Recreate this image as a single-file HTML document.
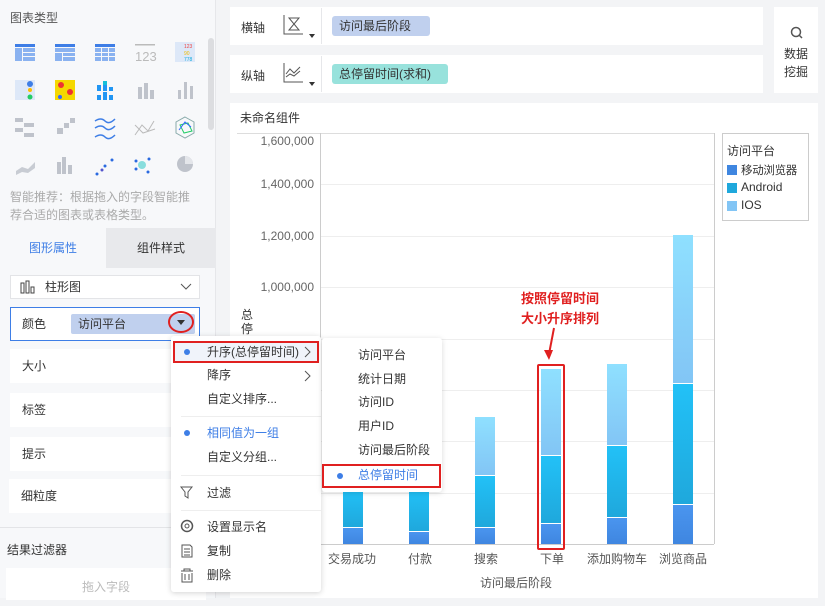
<!DOCTYPE html>
<html><head><meta charset="utf-8"><style>
*{box-sizing:border-box;margin:0;padding:0}
body{width:825px;height:598px;overflow:hidden;background:#f3f4f6;font-family:"Liberation Sans","Noto Sans CJK SC",sans-serif;font-size:12px;color:#333;position:relative}
.a{position:absolute}
.t{font-size:12px;color:#333;white-space:nowrap}
.g{color:#999}
.row{position:absolute;left:10px;width:190px;height:34px;background:#fff;padding-left:12px;line-height:34px}
.mi{position:absolute;left:0;width:150px;height:22px;line-height:22px;padding-left:36px}
.si{position:absolute;left:0;width:120px;line-height:22px;padding-left:36px}
.bar{position:absolute;width:20px}
.c1{background:linear-gradient(#4a95ef,#3f86e0)}
.c2{background:linear-gradient(#22c1f7,#1fa8dc)}
.c3{background:linear-gradient(#8fe0ff,#82c5f5)}
</style></head><body>
<div class="a" style="left:0;top:0;width:216px;height:598px;background:#f7f8fa;border-right:1px solid #e6e7ea"></div>
<div class="a t" style="left:10px;top:9px;color:#555">图表类型</div>
<div class="a" style="left:208px;top:38px;width:6px;height:92px;background:#dcdde0;border-radius:3px"></div>
<svg class="a" style="left:0;top:35px" width="205" height="150">
<g fill="#3e7ee6"><rect x="15" y="9" width="20" height="3"/><rect x="55" y="9" width="20" height="3"/><rect x="95" y="9" width="20" height="3"/></g>
<g fill="#8ab2f0"><rect x="15" y="13" width="7" height="13"/><rect x="23" y="13" width="12" height="4"/><rect x="23" y="18" width="12" height="3"/><rect x="23" y="22" width="12" height="4"/>
<rect x="55" y="13" width="20" height="4"/><rect x="55" y="18" width="7" height="8"/><rect x="63" y="18" width="12" height="3"/><rect x="63" y="22" width="12" height="4"/>
<rect x="95" y="13" width="6" height="4"/><rect x="102" y="13" width="6" height="4"/><rect x="109" y="13" width="6" height="4"/><rect x="95" y="18" width="6" height="3"/><rect x="102" y="18" width="6" height="3"/><rect x="109" y="18" width="6" height="3"/><rect x="95" y="22" width="6" height="4"/><rect x="102" y="22" width="6" height="4"/><rect x="109" y="22" width="6" height="4"/></g>
<rect x="135" y="9" width="20" height="1.5" fill="#bbb"/><text x="135" y="26" font-size="13" fill="#bbb" font-family="Liberation Sans">123</text>
<rect x="175" y="7" width="20" height="20" fill="#dde8f8"/><text x="184" y="13" font-size="5" fill="#e44">123</text><text x="184" y="20" font-size="5" fill="#eb0">90</text><text x="184" y="26" font-size="5" fill="#1ad">778</text>
<rect x="15" y="45" width="20" height="20" fill="#dde8f8"/><circle cx="30" cy="49" r="3" fill="#3e7ee6"/><circle cx="30" cy="55" r="2" fill="#fb0"/><circle cx="30" cy="62" r="2.5" fill="#2c6"/>
<rect x="55" y="45" width="20" height="20" fill="#f5d800"/><circle cx="61" cy="50" r="3" fill="#e33"/><circle cx="70" cy="57" r="3" fill="#e33"/><circle cx="60" cy="62" r="2" fill="#36f"/>
<g fill="#2196f3"><rect x="97" y="50" width="4" height="6"/><rect x="103" y="46" width="4" height="10"/><rect x="109" y="52" width="4" height="4"/><rect x="97" y="60" width="4" height="5"/><rect x="103" y="57" width="4" height="8"/><rect x="109" y="60" width="4" height="5"/></g><g fill="#16c0d8"><rect x="103" y="46" width="4" height="4"/></g>
<g fill="#bfc3cb"><rect x="138" y="52" width="4" height="12"/><rect x="144" y="48" width="4" height="16"/><rect x="150" y="55" width="4" height="9"/><rect x="178" y="55" width="3" height="9"/><rect x="184" y="47" width="3" height="17"/><rect x="190" y="51" width="3" height="13"/>
<rect x="15" y="83" width="8" height="4"/><rect x="24" y="88" width="10" height="4"/><rect x="15" y="93" width="8" height="4"/><rect x="24" y="98" width="10" height="4"/><rect x="57" y="93" width="6" height="6"/><rect x="64" y="88" width="5" height="5"/><rect x="70" y="83" width="5" height="5"/></g>
<path d="M95 86 q6 -4 10 0 t10 -2 M95 93 q6 -4 10 0 t10 -2 M95 102 q6 -4 10 0 t10 -2" stroke="#3e7ee6" stroke-width="1.5" fill="none"/>
<path d="M135 100 l7 -10 l6 6 l6 -10 M135 90 l8 8 l12 -4" stroke="#bbb" fill="none"/>
<path d="M185 82 l9 5 v11 l-9 5 l-9 -5 v-11z" stroke="#8aa" fill="none"/><path d="M180 90 l8 -2 l4 8 l-8 2z" stroke="#2c6" fill="none"/><path d="M179 95 l6 -8 l6 5" stroke="#36f" fill="none"/>
<path d="M16 136 l6 -4 l6 2 l7 -7 v6 l-7 5 l-6 -1 l-6 3z" fill="#c8ccd3"/>
<g fill="#bfc3cb"><rect x="57" y="127" width="4" height="12"/><rect x="62" y="122" width="4" height="17"/><rect x="68" y="130" width="4" height="9"/></g>
<g fill="#2a6ae0"><circle cx="97" cy="139" r="1.5"/><circle cx="105" cy="131" r="1.5"/><circle cx="112" cy="125" r="1.5"/><circle cx="102" cy="135" r="1.5" fill="#55c"/></g>
<circle cx="142" cy="130" r="4" fill="#8dd"/><g fill="#2a6ae0"><circle cx="136" cy="126" r="1.5"/><circle cx="149" cy="124" r="1.5"/><circle cx="136" cy="134" r="1.5"/><circle cx="148" cy="137" r="1.5"/></g>
<circle cx="185" cy="129" r="8" fill="#bfc3cb"/><path d="M185 129 v-8 a8 8 0 0 1 8 8z" fill="#e4e6ea"/>
</svg>
<div class="a" style="left:10px;top:188px;width:190px;line-height:18px;color:#aaa">智能推荐：根据拖入的字段智能推荐合适的图表或表格类型。</div>
<div class="a" style="left:0;top:228px;width:106px;height:40px;background:#f7f8fa;line-height:40px;text-align:center;color:#3e7ee6">图形属性</div>
<div class="a" style="left:106px;top:228px;width:110px;height:40px;background:#e8e9ec;line-height:40px;text-align:center">组件样式</div>
<div class="a" style="left:10px;top:275px;width:190px;height:24px;background:#fff;border:1px solid #e3e4e7;line-height:22px;padding-left:34px">柱形图</div>
<svg class="a" style="left:20px;top:280px" width="16" height="14"><path d="M1 3v10h3v-10zM6 1v12h3v-12zM11 7v6h3v-6z" stroke="#444" fill="none"/></svg>
<svg class="a" style="left:180px;top:283px" width="12" height="8"><path d="M1 1l5 5l5-5" stroke="#555" fill="none"/></svg>
<div class="a" style="left:10px;top:307px;width:190px;height:34px;background:#fff;border:1px solid #3e7ee6;line-height:32px;padding-left:11px">颜色</div>
<div class="a" style="left:71px;top:314px;width:124px;height:20px;background:#c0d0ee;line-height:20px;padding-left:7px;border-radius:2px">访问平台</div>
<div class="a" style="left:168px;top:311px;width:26px;height:22px;border:2px solid #e02020;border-radius:50%"></div>
<div class="a" style="left:177px;top:320px;width:0;height:0;border-left:4px solid transparent;border-right:4px solid transparent;border-top:5px solid #333"></div>
<div class="row" style="top:349px">大小</div>
<div class="row" style="top:393px">标签</div>
<div class="row" style="top:437px">提示</div>
<div class="row" style="top:479px;left:9px">细粒度</div>
<div class="a" style="left:0;top:527px;width:215px;height:1px;background:#e3e4e7"></div>
<div class="a t" style="left:7px;top:541px">结果过滤器</div>
<div class="a" style="left:6px;top:568px;width:200px;height:32px;background:#fff;text-align:center;line-height:38px;color:#bbb">拖入字段</div>

<div class="a" style="left:230px;top:7px;width:533px;height:38px;background:#fff"></div>
<div class="a" style="left:230px;top:55px;width:533px;height:38px;background:#fff"></div>
<div class="a" style="left:321px;top:8px;width:1px;height:36px;background:#e6e7ea"></div>
<div class="a" style="left:321px;top:56px;width:1px;height:36px;background:#e6e7ea"></div>
<div class="a t" style="left:241px;top:19px">横轴</div>
<div class="a t" style="left:241px;top:67px">纵轴</div>
<svg class="a" style="left:283px;top:14px" width="36" height="26"><path d="M1 1v19h19 M6 4h10l-5 6l5 6h-10l5-6z" stroke="#555" fill="none"/><path d="M26 20l6 0l-3 4z" fill="#333"/></svg>
<svg class="a" style="left:283px;top:62px" width="36" height="26"><path d="M1 1v19h19 M3 12l4-5l4 4l6-6 M3 15l4-3l4 2l6-5" stroke="#555" fill="none"/><path d="M26 20l6 0l-3 4z" fill="#333"/></svg>
<div class="a" style="left:332px;top:16px;width:98px;height:20px;background:#c0d0ee;border-radius:3px;line-height:20px;padding-left:7px">访问最后阶段</div>
<div class="a" style="left:332px;top:64px;width:116px;height:20px;background:#98e2dc;border-radius:3px;line-height:20px;padding-left:7px">总停留时间(求和)</div>
<div class="a" style="left:774px;top:7px;width:44px;height:86px;background:#fff"></div>
<svg class="a" style="left:790px;top:26px" width="14" height="14"><circle cx="6" cy="6" r="4.5" stroke="#555" stroke-width="1.5" fill="none"/><path d="M9 9l3 3" stroke="#555" stroke-width="1.5"/></svg>
<div class="a t" style="left:784px;top:45px;line-height:18px">数据<br>挖掘</div>

<div class="a" style="left:230px;top:103px;width:588px;height:495px;background:#fff"></div>
<div class="a t" style="left:240px;top:109px">未命名组件</div>
<div class="a" style="left:237px;top:133px;width:478px;height:1px;background:#ddd"></div>
<div class="a" style="left:320px;top:133px;width:1px;height:411px;background:#ccc"></div>
<div class="a" style="left:714px;top:133px;width:1px;height:411px;background:#ccc"></div>
<div class="a" style="left:321px;top:184px;width:393px;height:1px;background:#eee"></div>
<div class="a" style="left:321px;top:236px;width:393px;height:1px;background:#eee"></div>
<div class="a" style="left:321px;top:287px;width:393px;height:1px;background:#eee"></div>
<div class="a" style="left:321px;top:339px;width:393px;height:1px;background:#eee"></div>
<div class="a" style="left:321px;top:390px;width:393px;height:1px;background:#eee"></div>
<div class="a" style="left:321px;top:441px;width:393px;height:1px;background:#eee"></div>
<div class="a" style="left:321px;top:493px;width:393px;height:1px;background:#eee"></div>
<div class="a" style="left:320px;top:544px;width:394px;height:1px;background:#ccc"></div>
<div class="a g" style="left:240px;top:134px;width:74px;text-align:right;color:#666">1,600,000</div>
<div class="a g" style="left:240px;top:177px;width:74px;text-align:right;color:#666">1,400,000</div>
<div class="a g" style="left:240px;top:229px;width:74px;text-align:right;color:#666">1,200,000</div>
<div class="a g" style="left:240px;top:280px;width:74px;text-align:right;color:#666">1,000,000</div>
<div class="a t" style="left:241px;top:308px;line-height:14px">总<br>停</div>
<div class="bar c2" style="left:343px;top:490px;height:37px"></div><div class="bar c1" style="left:343px;top:528px;height:16px"></div>
<div class="bar c2" style="left:409px;top:490px;height:41px"></div><div class="bar c1" style="left:409px;top:532px;height:12px"></div>
<div class="bar c3" style="left:475px;top:417px;height:58px"></div><div class="bar c2" style="left:475px;top:476px;height:51px"></div><div class="bar c1" style="left:475px;top:528px;height:16px"></div>
<div class="bar c3" style="left:541px;top:369px;height:86px"></div><div class="bar c2" style="left:541px;top:456px;height:67px"></div><div class="bar c1" style="left:541px;top:524px;height:20px"></div>
<div class="bar c3" style="left:607px;top:364px;height:81px"></div><div class="bar c2" style="left:607px;top:446px;height:71px"></div><div class="bar c1" style="left:607px;top:518px;height:26px"></div>
<div class="bar c3" style="left:673px;top:235px;height:148px"></div><div class="bar c2" style="left:673px;top:384px;height:120px"></div><div class="bar c1" style="left:673px;top:505px;height:39px"></div>
<div class="a" style="left:537px;top:364px;width:28px;height:186px;border:2px solid #e02020;border-radius:2px"></div>
<div class="a" style="left:505px;top:289px;line-height:20px;color:#e02020;font-weight:bold;font-size:13px;text-align:center;width:110px">按照停留时间<br>大小升序排列</div>
<svg class="a" style="left:540px;top:326px" width="20" height="36"><path d="M14 2l-5 26" stroke="#e02020" stroke-width="2"/><path d="M4 24l5 10l4-10z" fill="#e02020"/></svg>
<div class="a t" style="left:328px;top:550px;color:#555">交易成功</div>
<div class="a t" style="left:408px;top:550px;color:#555">付款</div>
<div class="a t" style="left:474px;top:550px;color:#555">搜索</div>
<div class="a t" style="left:540px;top:550px;color:#555">下单</div>
<div class="a t" style="left:587px;top:550px;color:#555">添加购物车</div>
<div class="a t" style="left:659px;top:550px;color:#555">浏览商品</div>
<div class="a t" style="left:480px;top:574px;color:#555">访问最后阶段</div>
<div class="a" style="left:722px;top:133px;width:87px;height:88px;border:1px solid #ccc"></div>
<div class="a t" style="left:727px;top:142px">访问平台</div>
<div class="a" style="left:727px;top:165px;width:10px;height:10px;background:#3f86e0"></div><div class="a t" style="left:741px;top:162px;font-size:11.5px;letter-spacing:-0.3px">移动浏览器</div>
<div class="a" style="left:727px;top:183px;width:10px;height:10px;background:#1fa8dc"></div><div class="a t" style="left:741px;top:180px">Android</div>
<div class="a" style="left:727px;top:201px;width:10px;height:10px;background:#82c5f5"></div><div class="a t" style="left:741px;top:198px">IOS</div>

<div class="a" style="left:171px;top:336px;width:150px;height:256px;background:#fff;box-shadow:0 1px 6px rgba(0,0,0,.18);border-radius:3px">
 <div class="a" style="left:2px;top:5px;width:146px;height:22px;background:#f0f3fa;border:2px solid #e02020"></div>
 <div class="mi" style="top:5px">升序(总停留时间)</div>
 <div class="mi" style="top:28px">降序</div>
 <div class="mi" style="top:52px">自定义排序...</div>
 <div class="a" style="left:10px;top:80px;width:140px;height:1px;background:#eee"></div>
 <div class="mi" style="top:86px;color:#3e7ee6">相同值为一组</div>
 <div class="mi" style="top:110px">自定义分组...</div>
 <div class="a" style="left:10px;top:139px;width:140px;height:1px;background:#eee"></div>
 <div class="mi" style="top:146px">过滤</div>
 <div class="a" style="left:10px;top:174px;width:140px;height:1px;background:#eee"></div>
 <div class="mi" style="top:180px">设置显示名</div>
 <div class="mi" style="top:204px">复制</div>
 <div class="mi" style="top:228px">删除</div>
 <div class="a" style="left:13px;top:13px;width:6px;height:6px;border-radius:50%;background:#3e7ee6"></div>
 <div class="a" style="left:13px;top:94px;width:6px;height:6px;border-radius:50%;background:#3e7ee6"></div>
 <svg class="a" style="left:133px;top:10px" width="8" height="40"><path d="M1 1l5 5l-5 5 M1 25l5 5l-5 5" stroke="#555" fill="none"/></svg>
 <svg class="a" style="left:8px;top:149px" width="16" height="100"><path d="M2 2h11l-4 5v6l-3-2v-4z" stroke="#555" fill="none"/>
 <circle cx="8" cy="41" r="5.5" stroke="#555" stroke-width="1.5" fill="none"/><circle cx="8" cy="41" r="2" stroke="#555" fill="none"/>
 <path d="M3 60h8l2 2v10h-10z M5 64h6 M5 67h6 M5 70h6" stroke="#555" fill="none"/>
 <path d="M2 86h12 M5 86v-2h6v2 M3 88v9h10v-9 M6 89v6 M10 89v6" stroke="#555" fill="none"/></svg>
</div>
<div class="a" style="left:322px;top:338px;width:120px;height:154px;background:#fff;box-shadow:0 1px 6px rgba(0,0,0,.15);border-radius:3px">
 <div class="si" style="top:6px">访问平台</div>
 <div class="si" style="top:30px">统计日期</div>
 <div class="si" style="top:53px">访问ID</div>
 <div class="si" style="top:77px">用户ID</div>
 <div class="si" style="top:101px">访问最后阶段</div>
 <div class="a" style="left:0;top:126px;width:119px;height:24px;border:2px solid #e02020"></div>
 <div class="si" style="top:126px;color:#3e7ee6">总停留时间</div>
 <div class="a" style="left:15px;top:135px;width:6px;height:6px;border-radius:50%;background:#3e7ee6"></div>
</div>
</body></html>
